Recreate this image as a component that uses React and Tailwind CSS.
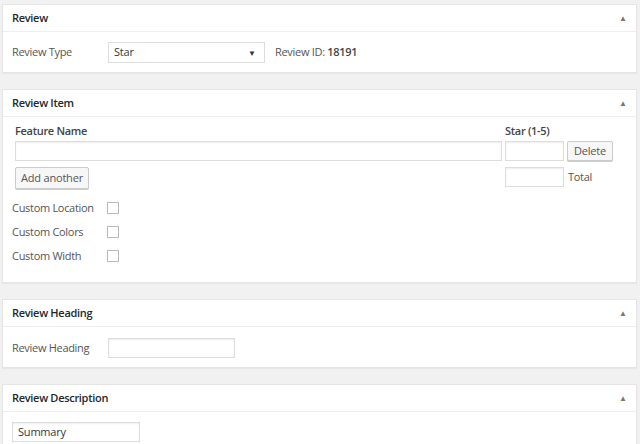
import React from "react";

function Toggle() {
  return (
    <span className="text-[8px] leading-none text-[#777] mr-[9px]">▲</span>
  );
}

function Panel({ title, height, children }) {
  return (
    <div
      className={`shrink-0 bg-white border border-[#e5e5e5] shadow-[0_1px_1px_rgba(0,0,0,0.04)] ${height}`}
    >
      <div className="h-[27px] flex items-center justify-between border-b border-[#eee] pl-[9px]">
        <span className="text-[11px] tracking-[-0.3px] font-semibold text-[#23282d]">{title}</span>
        <Toggle />
      </div>
      {children}
    </div>
  );
}

function Input({ className = "", value }) {
  return (
    <div
      className={`h-[20px] bg-white border border-[#ddd] shadow-[inset_0_1px_2px_rgba(0,0,0,0.07)] flex items-center px-[5px] text-[11px] tracking-[-0.2px] text-[#32373c] ${className}`}
    >
      {value}
    </div>
  );
}

function Check({ label }) {
  return (
    <div className="flex items-center h-[24px]">
      <span className="w-[95px] text-[11px] tracking-[-0.3px] text-[#555]">{label}</span>
      <span className="w-[12px] h-[12px] border border-[#bbb] bg-white" />
    </div>
  );
}

export default function App() {
  return (
    <div
      className="w-[640px] h-[444px] overflow-hidden bg-[#f1f1f1] pl-[2px] pr-[3px] pt-[4px] flex flex-col gap-[16px]"
      style={{ fontFamily: '"Open Sans", "Noto Sans", sans-serif' }}
    >
      <Panel title="Review" height="h-[69px]">
        <div className="flex items-center pl-[9px] pt-[10px]">
          <span className="w-[96px] text-[11px] tracking-[-0.3px] text-[#555]">Review Type</span>
          <div className="w-[157px] h-[21px] border border-[#ddd] bg-white flex items-center justify-between px-[5px]">
            <span className="text-[11px] tracking-[-0.2px] text-[#32373c]">Star</span>
            <span className="text-[8px] text-[#333] mr-[3px]">▼</span>
          </div>
          <span className="ml-[10px] text-[11px] tracking-[-0.3px] text-[#555]">
            Review ID: <b className="font-semibold text-[#444]">18191</b>
          </span>
        </div>
      </Panel>

      <Panel title="Review Item" height="h-[194px]">
        <div className="pl-[12px] pt-[6px]">
          <div className="flex">
            <div className="w-[490px]">
              <div className="h-[16px] text-[11px] tracking-[-0.3px] font-semibold text-[#444]">Feature Name</div>
              <Input className="mt-[2px] w-[487px]" />
              <div className="mt-[6px] w-[74px] h-[22px] border border-[#ccc] bg-[#f7f7f7] rounded-[2px] shadow-[0_1px_0_#ccc] flex items-center justify-center text-[11px] tracking-[-0.2px] text-[#555]">
                Add another
              </div>
            </div>
            <div>
              <div className="h-[16px] text-[11px] tracking-[-0.3px] font-semibold text-[#444]">Star (1-5)</div>
              <div className="mt-[2px] flex gap-[3px]">
                <Input className="w-[59px]" />
                <div className="w-[46px] h-[20px] border border-[#ccc] bg-[#f7f7f7] rounded-[2px] shadow-[0_1px_0_#ccc] flex items-center justify-center text-[11px] tracking-[-0.2px] text-[#555]">
                  Delete
                </div>
              </div>
              <div className="mt-[6px] flex items-center gap-[4px]">
                <Input className="w-[59px]" />
                <span className="text-[11px] tracking-[-0.3px] text-[#555]">Total</span>
              </div>
            </div>
          </div>
          <div className="-ml-[3px] mt-[7px]">
            <Check label="Custom Location" />
            <Check label="Custom Colors" />
            <Check label="Custom Width" />
          </div>
        </div>
      </Panel>

      <Panel title="Review Heading" height="h-[69px]">
        <div className="flex items-center pl-[9px] pt-[11px]">
          <span className="w-[96px] text-[11px] tracking-[-0.3px] text-[#555]">Review Heading</span>
          <Input className="w-[127px]" />
        </div>
      </Panel>

      <Panel title="Review Description" height="h-[80px]">
        <div className="pl-[9px] pt-[10px]">
          <Input className="w-[128px]" value="Summary" />
        </div>
      </Panel>
    </div>
  );
}
